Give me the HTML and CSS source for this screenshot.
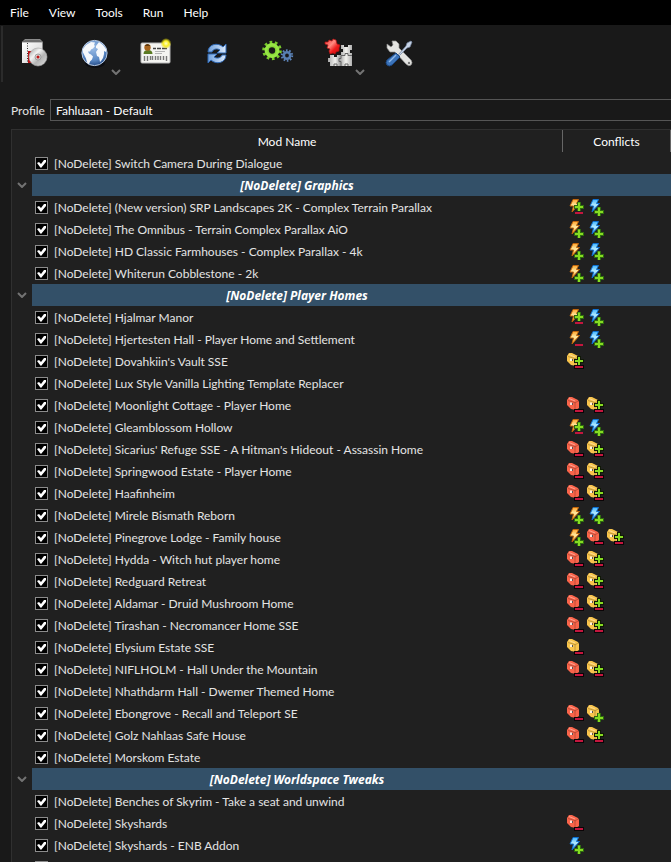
FILE: index.html
```html
<!DOCTYPE html>
<html lang="en">
<head>
<meta charset="utf-8">
<meta name="viewport" content="width=device-width, initial-scale=1">
<title>Mod Organizer</title>
<link rel="stylesheet" href="styles.css">
</head>
<body>
<svg class="defs" aria-hidden="true">
  <defs>
    <linearGradient id="gOrange" x1="0" y1="0" x2="0" y2="1"><stop offset="0" stop-color="#ffa52c"/><stop offset=".45" stop-color="#ffe9a0"/><stop offset="1" stop-color="#ff9a10"/></linearGradient>
    <linearGradient id="gBlue" x1="0" y1="0" x2="0" y2="1"><stop offset="0" stop-color="#3fb4ff"/><stop offset=".45" stop-color="#b5ecff"/><stop offset="1" stop-color="#1c8df0"/></linearGradient>
    <path id="bolt" d="M6 1.500h5.500l-2 4h3l-7.500 8.500 1.500-6h-3.500z" stroke-linejoin="round"/>
    <g id="plus"><path d="M10 9h4v3h3v4h-3v2h-4v-2h-3v-4h3z" fill="#2f6a10"/><path d="M11 9.500h2v3.500h3v2h-3v3h-2v-3h-3v-2h3z" fill="#86dc22"/></g>
    <path id="minus" d="M8 14h8v2h-8z" fill="#c4163e"/>
    <g id="plusDark"><path d="M10 4h4v3h3v4h-3v3h-4v-3h-3v-4h3z" fill="#101806"/><path d="M11 5h2v3h3v2h-3v3h-2v-3h-3v-2h3z" fill="#86dc22"/></g>
    <g id="minusDark"><path d="M7 13h10v4h-10z" fill="#0b0507"/><path d="M8 14h8v2h-8z" fill="#c4163e"/></g>
    <g id="chest"><path d="M0 4l2-3h3l6 3 1 2v6l-3 2-5-1-4-4z"/><path d="M1 4.500l7 2v7M8 7l3-2" fill="none" stroke="#000" stroke-opacity=".22"/><path d="M2 2.500l6 2.500" stroke="#fff" stroke-opacity=".4"/><path d="M3 6.500h2v2.500h-2z" fill="#fff" fill-opacity=".8"/><path d="M5 7h1v2h-1z" fill="#555"/></g>
    <symbol id="bo" viewBox="0 0 18 18"><use href="#bolt" fill="url(#gOrange)" stroke="#c0660c"/></symbol>
    <symbol id="bo-p" viewBox="0 0 18 18"><use href="#bo" width="18" height="18"/><use href="#plus"/></symbol>
    <symbol id="bo-m" viewBox="0 0 18 18"><use href="#bo" width="18" height="18"/><use href="#minus"/></symbol>
    <symbol id="bo-pm" viewBox="0 0 18 18"><use href="#bo" width="18" height="18"/><use href="#plus" y="-5"/><use href="#minus"/></symbol>
    <symbol id="bl-p" viewBox="0 0 18 18"><use href="#bolt" fill="url(#gBlue)" stroke="#0f6fd0"/><use href="#plus"/></symbol>
    <symbol id="cr-m" viewBox="0 0 18 18"><use href="#chest" fill="#f9644a"/><use href="#minusDark"/></symbol>
    <symbol id="cy-m" viewBox="0 0 18 18"><use href="#chest" fill="#f8c44c"/><use href="#minusDark"/></symbol>
    <symbol id="cy-p" viewBox="0 0 18 18"><use href="#chest" fill="#f8c44c"/><use href="#plus"/></symbol>
    <symbol id="cy-pm" viewBox="0 0 18 18"><use href="#chest" fill="#f8c44c"/><use href="#plusDark"/><use href="#minusDark"/></symbol>
    <symbol id="chev" viewBox="0 0 10 6"><path d="M1 1l4 4 4-4" fill="none" stroke="#737373" stroke-width="2"/></symbol>

    <linearGradient id="gPaper" x1="0" y1="0" x2="1" y2="1"><stop offset="0" stop-color="#fff"/><stop offset="1" stop-color="#cfcfcf"/></linearGradient>
    <linearGradient id="gDisc" x1="0" y1="0" x2="1" y2="1"><stop offset="0" stop-color="#989898"/><stop offset=".35" stop-color="#f4f4f4"/><stop offset=".6" stop-color="#b4b4b4"/><stop offset="1" stop-color="#e0e0e0"/></linearGradient>
    <radialGradient id="gGlobe" cx=".45" cy=".3" r=".75"><stop offset="0" stop-color="#9bbce6"/><stop offset=".65" stop-color="#5a88c4"/><stop offset="1" stop-color="#1d437f"/></radialGradient>
    <radialGradient id="gSun"><stop offset="0" stop-color="#ffffc8"/><stop offset=".5" stop-color="#f8ee20"/><stop offset="1" stop-color="#e8dc00" stop-opacity="0"/></radialGradient>
    <linearGradient id="gArrow" x1="0" y1="0" x2="1" y2="0"><stop offset="0" stop-color="#6fa0dc"/><stop offset="1" stop-color="#dceafc"/></linearGradient>
    <radialGradient id="gGreen"><stop offset=".3" stop-color="#69bd20"/><stop offset="1" stop-color="#98e645"/></radialGradient>
    <linearGradient id="gRed" x1="0" y1="0" x2="1" y2="1"><stop offset="0" stop-color="#f03030"/><stop offset=".4" stop-color="#ff8a80"/><stop offset=".65" stop-color="#ee1c1c"/><stop offset="1" stop-color="#c80808"/></linearGradient>
    <linearGradient id="gSteel" x1="0" y1="0" x2="1" y2="0"><stop offset="0" stop-color="#a8a8a8"/><stop offset=".3" stop-color="#f1f1ee"/><stop offset=".5" stop-color="#a4a4a4"/><stop offset=".75" stop-color="#f4f4f0"/><stop offset="1" stop-color="#b0b0b0"/></linearGradient>
  </defs>
</svg>

<nav class="menubar" aria-label="Main menu">
  <button>File</button><button>View</button><button>Tools</button><button>Run</button><button>Help</button>
</nav>

<div class="toolbar" role="toolbar">
  <button class="tool" aria-label="Install mod">
    <svg width="32" height="32" viewBox="0 0 32 32"><path d="M4 4l3-3h15l3 3v21h-21z" fill="#8b8b8b"/><path d="M4 4.500h20v20.500h-20z" fill="url(#gPaper)"/><path d="M3.500 4h21l-3-2h-14z" fill="#6d6d6d"/><path d="M9.500 5v20" stroke="#333" stroke-dasharray="1 1.500"/><path d="M10 13h5v12h-5z" fill="#b90f12"/><circle cx="20" cy="19" r="9" fill="url(#gDisc)" stroke="#a6a6a6" stroke-width=".6"/><circle cx="20" cy="19" r="3" fill="#d7d7d7" stroke="#888" stroke-width=".7"/><circle cx="20" cy="19" r="1.500" fill="#c01818"/></svg>
  </button>
  <button class="tool" aria-label="Visit website">
    <svg width="32" height="32" viewBox="0 0 32 32"><ellipse cx="16" cy="25" rx="10" ry="5" fill="#0b0d12"/><circle cx="15.500" cy="15" r="12.600" fill="url(#gGlobe)" stroke="#b9cbe4" stroke-width="1"/><path d="M4 11l3-4 5-3 4 .5-1 2.500 1 1-2 2.500-2 1-1 2-2 0 1 2 2 1 2 2-1 3-2 2-1 3-2-2-1-4-2-4-1-2z" fill="#f6f8fb"/><path d="M17 8l3-4 4 3 3 4v3l-2-1 0 3-1 4-2 3-1 1-1-5-2-1-1-4 2-3-2-1z" fill="#f6f8fb"/></svg>
    <svg class="drop" width="10" height="6"><use href="#chev"/></svg>
  </button>
  <button class="tool" aria-label="Profiles">
    <svg width="32" height="32" viewBox="0 0 32 32"><rect x="1" y="5" width="29" height="20" rx="1" fill="#f4f4f1" stroke="#b8b8b8"/><path d="M3.500 16q0-4 4.500-4t4.500 4z" fill="#5a7a22"/><circle cx="7.500" cy="9.500" r="3.200" fill="#a8651e"/><path d="M4.500 8q3-4 6 0z" fill="#5f390e"/><path d="M13 10.500h3m1 0h4m1 0h5" stroke="#444" stroke-width="1.500"/><path d="M15 13.500h10M15 15.500h7" stroke="#b5b5b5"/><path d="M4.500 18v5M7.500 18v5M10.500 18v4M12.500 18v4M15.500 18v4M18 18v4M20.500 18v4M23.500 18v4M26.500 18v5" stroke="#777" stroke-width="1.400"/><circle cx="26" cy="5.500" r="5.500" fill="url(#gSun)"/></svg>
  </button>
  <button class="tool" aria-label="Refresh">
    <svg width="32" height="32" viewBox="0 0 32 32"><path d="M7 14c0-8 10-10 15-5l3-3v9h-9l3-3c-3-2-7-1-8 2z" fill="url(#gArrow)" stroke="#2f68b4"/><path d="M25 17c0 8-10 10-15 5l-3 3v-9h9l-3 3c3 2 7 1 8-2z" fill="url(#gArrow)" stroke="#2f68b4"/></svg>
  </button>
  <button class="tool" aria-label="Executables">
    <svg width="32" height="32" viewBox="0 0 32 32"><circle cx="10" cy="12.500" r="8.300" fill="none" stroke="#78cb2b" stroke-width="3" stroke-dasharray="2.608 2.608"/><circle cx="10" cy="12.500" r="5.300" fill="none" stroke="url(#gGreen)" stroke-width="4.200"/><circle cx="25" cy="17.500" r="5.200" fill="none" stroke="#5c83b8" stroke-width="2" stroke-dasharray="1.630 1.630"/><circle cx="25" cy="17.500" r="3.200" fill="none" stroke="#587fb2" stroke-width="2.600"/></svg>
  </button>
  <button class="tool" aria-label="Plugin tools">
    <svg width="32" height="32" viewBox="0 0 32 32"><path d="M18 7h3v2h4v-2h4v5h-2v3h2v13h-22v-4h-2v-4h2v-3h4v2h3v-2h4v-3h2v-3h-2z" fill="url(#gSteel)"/><path d="M18 17.500h4v-2h3v2h4M18 17.500v3h-2v3h2v4.500M11 28v-2h3v2M22 28v-2h3v2" fill="none" stroke="#666"/><path d="M2 4l3 0 1-2 3 1 1-2 3 1 1 4 3 1-1 3 0 3-3 1-1 2-2-1-3 1-1-3 1-2-3-1 1-3-3-1z" fill="url(#gRed)" stroke="#b31313" stroke-width=".7"/></svg>
    <svg class="drop" width="10" height="6"><use href="#chev"/></svg>
  </button>
  <button class="tool" aria-label="Settings">
    <svg width="32" height="32" viewBox="0 0 32 32"><path d="M3 6l4 3 2-2-1-4 4 0 3 3v4l12 12q2 3 0 5t-5-1l-11-12-5 0-3-4z" fill="#e4e4e1" stroke="#8f8f8f" stroke-width=".7"/><circle cx="25" cy="25" r="1.200" fill="#777"/><path d="M14 17l8-9 1-3 4-2 1 1-2 5-3 1-8 8z" fill="#c8d4e6" stroke="#71839e" stroke-width=".7"/><path d="M12 15l4 4-8 8q-3 2-5 0t0-5z" fill="#3b73b9" stroke="#1b4680"/><path d="M5 24l7-7" stroke="#8fb8e8" stroke-width="1.500"/></svg>
  </button>
</div>

<div class="profile">
  <label for="profile">Profile</label>
  <select id="profile"><option>Fahluaan - Default</option></select>
</div>

<main class="mods">
<table>
  <colgroup><col class="c-fold"><col><col class="c-conf"></colgroup>
  <thead><tr><th colspan="2">Mod Name</th><th class="conf-head">Conflicts</th></tr></thead>
  <tbody>
  <tr><td></td><td><label><input type="checkbox" checked>[NoDelete] Switch Camera During Dialogue</label></td><td></td></tr>
  <tr class="section"><td><button aria-label="Collapse"><svg width="10" height="6"><use href="#chev"/></svg></button></td><th>[NoDelete] Graphics</th><td></td></tr>
  <tr><td></td><td><label><input type="checkbox" checked>[NoDelete] (New version) SRP Landscapes 2K - Complex Terrain Parallax</label></td><td><div class="flags"><svg><use href="#bo-pm"/></svg><svg><use href="#bl-p"/></svg></div></td></tr>
  <tr><td></td><td><label><input type="checkbox" checked>[NoDelete] The Omnibus - Terrain Complex Parallax AiO</label></td><td><div class="flags"><svg><use href="#bo-p"/></svg><svg><use href="#bl-p"/></svg></div></td></tr>
  <tr><td></td><td><label><input type="checkbox" checked>[NoDelete] HD Classic Farmhouses - Complex Parallax - 4k</label></td><td><div class="flags"><svg><use href="#bo-p"/></svg><svg><use href="#bl-p"/></svg></div></td></tr>
  <tr><td></td><td><label><input type="checkbox" checked>[NoDelete] Whiterun Cobblestone - 2k</label></td><td><div class="flags"><svg><use href="#bo-p"/></svg><svg><use href="#bl-p"/></svg></div></td></tr>
  <tr class="section"><td><button aria-label="Collapse"><svg width="10" height="6"><use href="#chev"/></svg></button></td><th>[NoDelete] Player Homes</th><td></td></tr>
  <tr><td></td><td><label><input type="checkbox" checked>[NoDelete] Hjalmar Manor</label></td><td><div class="flags"><svg><use href="#bo-pm"/></svg><svg><use href="#bl-p"/></svg></div></td></tr>
  <tr><td></td><td><label><input type="checkbox" checked>[NoDelete] Hjertesten Hall - Player Home and Settlement</label></td><td><div class="flags"><svg><use href="#bo-m"/></svg><svg><use href="#bl-p"/></svg></div></td></tr>
  <tr><td></td><td><label><input type="checkbox" checked>[NoDelete] Dovahkiin's Vault SSE</label></td><td><div class="flags"><svg><use href="#cy-pm"/></svg></div></td></tr>
  <tr><td></td><td><label><input type="checkbox" checked>[NoDelete] Lux Style Vanilla Lighting Template Replacer</label></td><td></td></tr>
  <tr><td></td><td><label><input type="checkbox" checked>[NoDelete] Moonlight Cottage - Player Home</label></td><td><div class="flags"><svg><use href="#cr-m"/></svg><svg><use href="#cy-pm"/></svg></div></td></tr>
  <tr><td></td><td><label><input type="checkbox" checked>[NoDelete] Gleamblossom Hollow</label></td><td><div class="flags"><svg><use href="#bo-pm"/></svg><svg><use href="#bl-p"/></svg></div></td></tr>
  <tr><td></td><td><label><input type="checkbox" checked>[NoDelete] Sicarius' Refuge SSE - A Hitman's Hideout - Assassin Home</label></td><td><div class="flags"><svg><use href="#cr-m"/></svg><svg><use href="#cy-pm"/></svg></div></td></tr>
  <tr><td></td><td><label><input type="checkbox" checked>[NoDelete] Springwood Estate - Player Home</label></td><td><div class="flags"><svg><use href="#cr-m"/></svg><svg><use href="#cy-pm"/></svg></div></td></tr>
  <tr><td></td><td><label><input type="checkbox" checked>[NoDelete] Haafinheim</label></td><td><div class="flags"><svg><use href="#cr-m"/></svg><svg><use href="#cy-pm"/></svg></div></td></tr>
  <tr><td></td><td><label><input type="checkbox" checked>[NoDelete] Mirele Bismath Reborn</label></td><td><div class="flags"><svg><use href="#bo-p"/></svg><svg><use href="#bl-p"/></svg></div></td></tr>
  <tr><td></td><td><label><input type="checkbox" checked>[NoDelete] Pinegrove Lodge - Family house</label></td><td><div class="flags"><svg><use href="#bo-p"/></svg><svg><use href="#cr-m"/></svg><svg><use href="#cy-pm"/></svg></div></td></tr>
  <tr><td></td><td><label><input type="checkbox" checked>[NoDelete] Hydda - Witch hut player home</label></td><td><div class="flags"><svg><use href="#cr-m"/></svg><svg><use href="#cy-pm"/></svg></div></td></tr>
  <tr><td></td><td><label><input type="checkbox" checked>[NoDelete] Redguard Retreat</label></td><td><div class="flags"><svg><use href="#cr-m"/></svg><svg><use href="#cy-pm"/></svg></div></td></tr>
  <tr><td></td><td><label><input type="checkbox" checked>[NoDelete] Aldamar - Druid Mushroom Home</label></td><td><div class="flags"><svg><use href="#cr-m"/></svg><svg><use href="#cy-pm"/></svg></div></td></tr>
  <tr><td></td><td><label><input type="checkbox" checked>[NoDelete] Tirashan - Necromancer Home SSE</label></td><td><div class="flags"><svg><use href="#cr-m"/></svg><svg><use href="#cy-pm"/></svg></div></td></tr>
  <tr><td></td><td><label><input type="checkbox" checked>[NoDelete] Elysium Estate SSE</label></td><td><div class="flags"><svg><use href="#cy-m"/></svg></div></td></tr>
  <tr><td></td><td><label><input type="checkbox" checked>[NoDelete] NIFLHOLM - Hall Under the Mountain</label></td><td><div class="flags"><svg><use href="#cr-m"/></svg><svg><use href="#cy-pm"/></svg></div></td></tr>
  <tr><td></td><td><label><input type="checkbox" checked>[NoDelete] Nhathdarm Hall - Dwemer Themed Home</label></td><td></td></tr>
  <tr><td></td><td><label><input type="checkbox" checked>[NoDelete] Ebongrove - Recall and Teleport SE</label></td><td><div class="flags"><svg><use href="#cr-m"/></svg><svg><use href="#cy-p"/></svg></div></td></tr>
  <tr><td></td><td><label><input type="checkbox" checked>[NoDelete] Golz Nahlaas Safe House</label></td><td><div class="flags"><svg><use href="#cr-m"/></svg><svg><use href="#cy-pm"/></svg></div></td></tr>
  <tr><td></td><td><label><input type="checkbox" checked>[NoDelete] Morskom Estate</label></td><td></td></tr>
  <tr class="section"><td><button aria-label="Collapse"><svg width="10" height="6"><use href="#chev"/></svg></button></td><th>[NoDelete] Worldspace Tweaks</th><td></td></tr>
  <tr><td></td><td><label><input type="checkbox" checked>[NoDelete] Benches of Skyrim - Take a seat and unwind</label></td><td></td></tr>
  <tr><td></td><td><label><input type="checkbox" checked>[NoDelete] Skyshards</label></td><td><div class="flags"><svg><use href="#cr-m"/></svg></div></td></tr>
  <tr><td></td><td><label><input type="checkbox" checked>[NoDelete] Skyshards - ENB Addon</label></td><td><div class="flags"><svg><use href="#bl-p"/></svg></div></td></tr>
  <tr><td></td><td><label><input type="checkbox" checked aria-label="Mod"></label></td><td></td></tr>
  </tbody>
</table>
</main>
</body>
</html>
```
FILE: styles.css
```css
* { box-sizing: border-box; }

body {
  margin: 0;
  height: 100vh;
  overflow: hidden;
  display: flex;
  flex-direction: column;
  background: #191919;
  color: #e4e4e4;
  font: 12px/16px "Segoe UI", Lato, "Open Sans", sans-serif;
}

button, select, input { font: inherit; color: inherit; margin: 0; }
button { border: 0; padding: 0; background: none; }
svg { display: block; }

.defs { position: absolute; width: 0; height: 0; }

.menubar {
  display: flex;
  flex: none;
  gap: 20px;
  height: 25px;
  padding: 1px 0 0 10px;
  background: #000;
  color: #fff;
}

.toolbar {
  display: flex;
  flex: none;
  height: 56px;
  margin: 1px 0 0 1px;
  border-left: 2px solid #2b2b2b;
}

.tool {
  position: relative;
  width: 61px;
  display: flex;
  justify-content: center;
  align-items: center;
}

.drop { position: absolute; right: 4px; bottom: 7px; }

.profile {
  display: flex;
  flex: none;
  align-items: center;
  margin: 17px 0 8px 11px;
  height: 22px;
}

.profile label { flex: 0 0 39px; padding-top: 2px; }

.profile select {
  flex: 1;
  height: 22px;
  padding: 2px 5px 0;
  appearance: none;
  background: #191919;
  color: #fff;
  border: 1px solid #555;
  border-right: 0;
  border-radius: 0;
}

.mods {
  flex: 1;
  min-height: 0;
  overflow: hidden;
  margin-left: 11px;
  background: #202020;
  border: solid #303030;
  border-width: 1px 0 0 1px;
}

table {
  width: 100%;
  table-layout: fixed;
  border-collapse: separate;
  border-spacing: 0;
}

.c-fold { width: 20px; }
.c-conf { width: 109px; }

tr { height: 22px; }
td, th { padding: 0; white-space: nowrap; }

thead th { color: #fff; font-weight: 400; padding-top: 2px; }
thead .conf-head {
  border: solid #666;
  border-width: 0 1px;
}

.section th, .section td + th + td { background: #335068; }
.section th {
  color: #fff;
  font-family: "Segoe UI", "Noto Sans", sans-serif;
  font-style: italic;
  font-weight: 700;
  padding-top: 2px;
}
.section button { display: block; margin: 0 auto; }

td label {
  display: flex;
  align-items: center;
  gap: 6px;
  height: 22px;
  padding: 1px 0 0 3px;
}

input[type="checkbox"] {
  appearance: none;
  flex: none;
  width: 13px;
  height: 13px;
  background: #000;
  border: 1px solid #8c8c8c;
}

input[type="checkbox"]:checked::before {
  content: "";
  display: block;
  width: 11px;
  height: 11px;
  background: #fff;
  clip-path: polygon(1px 5px, 3px 4px, 5px 6px, 8px 2px, 10px 2px, 10px 4px, 5px 10px, 4px 9px);
}

.flags { display: flex; gap: 2px; padding-left: 5px; }
.flags svg { width: 18px; height: 18px; }
```
